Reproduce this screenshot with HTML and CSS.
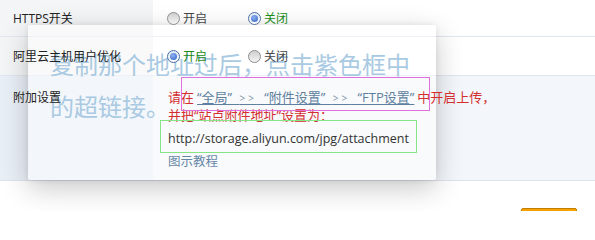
FILE: index.html
```html
<!DOCTYPE html>
<html lang="zh-CN">
<head>
<meta charset="utf-8">
<title>附件设置</title>
<link rel="stylesheet" href="styles.css">
</head>
<body>
<div class="page">
  <div class="table">
    <div class="row row-1">
      <div class="label"><span class="txt">HTTPS开关</span></div>
      <div class="value">
        <label class="opt"><span class="radio"></span><span class="txt">开启</span></label>
        <label class="opt on-green"><span class="radio checked"></span><span class="txt">关闭</span></label>
      </div>
    </div>
    <div class="row row-2">
      <div class="label"><span class="txt">阿里云主机用户优化</span></div>
      <div class="value">
        <label class="opt on-green"><span class="radio checked"></span><span class="txt">开启</span></label>
        <label class="opt"><span class="radio"></span><span class="txt">关闭</span></label>
      </div>
    </div>
    <div class="row row-3">
      <div class="label"><span class="txt">附加设置</span></div>
      <div class="value extra">
        <div class="line red"><span class="txt">请在<a class="link">“全局” <span class="gt">&gt;&gt;</span> “附件设置” <span class="gt">&gt;&gt;</span> “FTP设置”</a>中开启上传，</span></div>
        <div class="line red"><span class="txt">并把“站点附件地址”设置为：</span></div>
        <div class="url"><span class="txt">http://storage.aliyun.com/jpg/attachment</span></div>
        <div class="line"><a class="txt tut">图示教程</a></div>
      </div>
    </div>
  </div>
  <div class="footer"><span class="btn"></span></div>

  <div class="overlay">
    <p class="hint">复制那个地址过后，点击紫色框中<br>的超链接。</p>
  </div>
  <div class="mark mark-pink"></div>
  <div class="mark mark-green"></div>
</div>
</body>
</html>
```
FILE: styles.css
```css
* { box-sizing: border-box; }
html, body { margin: 0; padding: 0; background: #fff; }
body {
  width: 595px;
  height: 211px;
  overflow: hidden;
  font-family: "Open Sans", "Noto Sans CJK SC", sans-serif;
  font-size: 12px;
  color: #333;
}
.page { position: relative; width: 595px; height: 211px; }

.table { display: flex; flex-direction: column; }
.row {
  display: grid;
  grid-template-columns: 153px 1fr;
  border-bottom: 1px solid #e1e7ee;
}
.row-1 { height: 37px; }
.row-2 { height: 39px; }
.row-3 { height: 105px; border-bottom-color: #dde3ea; }

.label {
  background: #f4f5f6;
  padding-left: 13px;
  display: flex;
  align-items: center;
  color: #222;
  font-size: 12px;
}
.row-3 .label { background: #e9eff6; align-items: flex-start; padding-top: 13px; line-height: 18px; }
.value { display: flex; align-items: center; padding-left: 14px; }
.row-3 .value { background: #f3f6fa; }

.txt { position: relative; z-index: 3; }

.opt { display: inline-flex; align-items: center; width: 81px; color: #444; font-size: 12px; }
.opt.on-green { color: #1a8a1a; }
.radio {
  position: relative;
  z-index: 3;
  width: 13px;
  height: 13px;
  border-radius: 50%;
  border: 1px solid #8d8d8d;
  background: linear-gradient(#cfcfcf, #f4f4f4);
  margin-right: 3px;
  display: inline-flex;
  align-items: center;
  justify-content: center;
}
.radio.checked { border-color: #4b6fa8; background: linear-gradient(#dfe8f5, #fff); }
.radio.checked::after {
  content: "";
  width: 7px;
  height: 7px;
  border-radius: 50%;
  background: radial-gradient(circle at 40% 35%, #8fb2f0, #2f5fc4);
}

.extra {
  display: flex;
  flex-direction: column;
  align-items: flex-start;
  justify-content: flex-start;
  padding-left: 15px;
  padding-top: 12px;
  font-size: 13px;
}
.line { line-height: 18px; height: 18px; white-space: nowrap; }
.red { color: #d42f2f; }
.link {
  color: #5f7f9e;
  text-decoration: underline;
  text-underline-offset: 2px;
  padding: 0 3px;
  word-spacing: 4px;
}
.gt { font-size: 10px; letter-spacing: 3px; color: #7f93a6; }
.url {
  height: 28px;
  line-height: 29px;
  font-family: "Open Sans", sans-serif;
  font-size: 12.5px;
  color: #333;
  white-space: nowrap;
}
.tut { color: #6786a6; font-size: 12.5px; }

.footer { display: flex; justify-content: flex-end; padding-top: 27px; padding-right: 18px; }
.btn {
  display: block;
  width: 56px;
  height: 20px;
  border: 1px solid #c47d00;
  border-radius: 2px;
  background: #f5a300;
}

.overlay {
  position: absolute;
  left: 28px;
  top: 25px;
  width: 408px;
  height: 155px;
  z-index: 1;
  background: rgba(255, 255, 255, 0.45);
  border-radius: 2px;
  box-shadow: 0 8px 28px rgba(0, 0, 0, 0.22), 0 0 6px rgba(0, 0, 0, 0.08);
}
.hint {
  margin: 0;
  padding: 18px 0 0 22px;
  font-family: "Noto Sans CJK SC", sans-serif;
  font-size: 24px;
  line-height: 42px;
  color: #a9cae2;
  white-space: nowrap;
}

.mark { position: absolute; z-index: 4; }
.mark-pink { left: 181px; top: 77px; width: 249px; height: 34px; border: 1px solid #e06fe0; }
.mark-green { left: 160px; top: 120px; width: 257px; height: 33px; border: 1px solid #86e486; }
```
